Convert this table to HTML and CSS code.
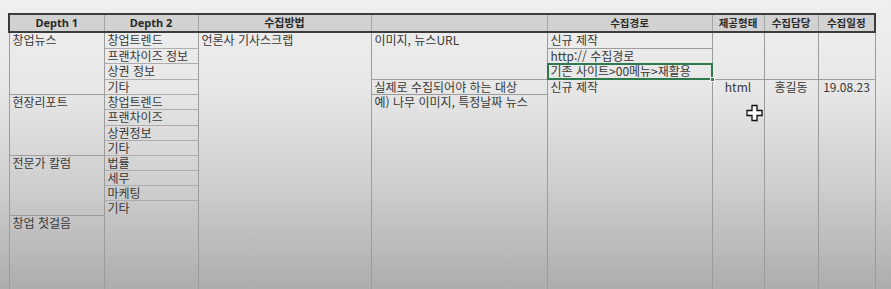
FILE: index.html
```html
<!DOCTYPE html>
<html lang="ko">
<head>
<meta charset="utf-8">
<title>수집 계획</title>
<link rel="stylesheet" href="styles.css">
</head>
<body>
<table class="sheet">
  <colgroup>
    <col class="w-d1"><col class="w-d2"><col class="w-way"><col class="w-note"><col class="w-path"><col class="w-type"><col class="w-owner"><col class="w-date">
  </colgroup>
  <thead>
    <tr class="hd">
      <th>Depth 1</th><th>Depth 2</th><th>수집방법</th><th></th><th>수집경로</th><th>제공형태</th><th>수집담당</th><th>수집일정</th>
    </tr>
  </thead>
  <tbody>
    <tr class="r16">
      <td rowspan="4" class="grp">창업뉴스</td>
      <td class="d2">창업트렌드</td>
      <td rowspan="13">언론사 기사스크랩</td>
      <td rowspan="3">이미지, 뉴스URL</td>
      <td>신규 제작</td>
      <td rowspan="3" class="c"></td>
      <td rowspan="3" class="c"></td>
      <td rowspan="3" class="c"></td>
    </tr>
    <tr class="r15"><td class="d2">프랜차이즈 정보</td><td>http:// 수집경로</td></tr>
    <tr class="r16"><td class="d2">상권 정보</td><td class="sel">기존 사이트&gt;00메뉴&gt;재활용<span class="selbox"><span class="handle"></span></span></td></tr>
    <tr class="r15">
      <td class="d2">기타</td>
      <td>실제로 수집되어야 하는 대상</td>
      <td rowspan="10">신규 제작</td>
      <td rowspan="10" class="c">html</td>
      <td rowspan="10" class="c">홍길동</td>
      <td rowspan="10" class="c">19.08.23</td>
    </tr>
    <tr class="r15"><td rowspan="4" class="grp">현장리포트</td><td class="d2">창업트렌드</td><td rowspan="9">예) 나무 이미지, 특정날짜 뉴스</td></tr>
    <tr class="r16"><td class="d2">프랜차이즈</td></tr>
    <tr class="r15"><td class="d2">상권정보</td></tr>
    <tr class="r15"><td class="d2">기타</td></tr>
    <tr class="r15"><td rowspan="4" class="grp">전문가 칼럼</td><td class="d2">법률</td></tr>
    <tr class="r15"><td class="d2">세무</td></tr>
    <tr class="r15"><td class="d2">마케팅</td></tr>
    <tr class="r15"><td rowspan="2" class="d2">기타</td></tr>
    <tr class="rfill"><td class="grp">창업 첫걸음</td></tr>
  </tbody>
</table>
<svg class="cursor" width="18" height="18" viewBox="0 0 18 18" aria-hidden="true">
  <path d="M6 1.5h5v5h5v5h-5v5H6v-5H1v-5h5z" fill="#888" opacity="0.35" transform="translate(1 1)"/>
  <path d="M6 1.5h5v5h5v5h-5v5H6v-5H1v-5h5z" fill="#fff" stroke="#111" stroke-width="1.3" stroke-linejoin="miter"/>
</svg>
</body>
</html>
```
FILE: styles.css
```css
html, body {
  margin: 0;
  height: 100%;
}
body {
  overflow: hidden;
  background: linear-gradient(to bottom, #efefef 0, #e7e7e7 90px, #cdcdcd 190px, #adadad 289px);
  font-family: "Noto Sans CJK KR", "Noto Sans", sans-serif;
  color: #383838;
  position: relative;
}
.sheet {
  margin: 13px 0 0 8px;
  width: 866px;
  table-layout: fixed;
  border-collapse: collapse;
  font-size: 12px;
}
.w-d1 { width: 95px; }
.w-d2 { width: 94px; }
.w-way { width: 173px; }
.w-note { width: 176px; }
.w-path { width: 165px; }
.w-type { width: 52px; }
.w-owner { width: 54px; }
.w-date { width: 57px; }

.hd th {
  height: 16px;
  background: #d2d2d2;
  border-top: 2px solid #3c3c3c;
  border-bottom: 2px solid #3c3c3c;
  border-left: 1px solid #a4a4a4;
  border-right: 1px solid #a4a4a4;
  font-family: "Noto Sans", "Noto Sans CJK KR", sans-serif;
  font-size: 11px;
  font-weight: 700;
  color: #2a2a2a;
  padding: 0;
  line-height: 14px;
  text-align: center;
}
.hd th:first-child { border-left: 2px solid #3c3c3c; }
.hd th:last-child { border-right: 2px solid #3c3c3c; }
.hd th:nth-child(n+5) { font-family: "Noto Sans CJK KR", sans-serif; font-size: 10.5px; }

td {
  border: 1px solid #9c9c9c;
  padding: 0 3px;
  vertical-align: top;
  line-height: 14px;
  white-space: nowrap;
  overflow: hidden;
}
td.d2 { border-color: #adadad; border-left-color: #9c9c9c; border-right-color: #9c9c9c; }
td.c { text-align: center; }
.r15 { height: 15px; }
.r16 { height: 16px; }
.rfill { height: 90px; }

td.sel { position: relative; overflow: visible; }
.selbox {
  position: absolute;
  left: -1px;
  top: -1px;
  right: -1px;
  bottom: -1px;
  border: 2px solid #2f7a4c;
}
.handle {
  position: absolute;
  right: -4px;
  bottom: -4px;
  width: 5px;
  height: 5px;
  background: #2f7a4c;
  border: 1px solid #fff;
  box-sizing: border-box;
}
.cursor {
  position: absolute;
  left: 746px;
  top: 104px;
}
```
